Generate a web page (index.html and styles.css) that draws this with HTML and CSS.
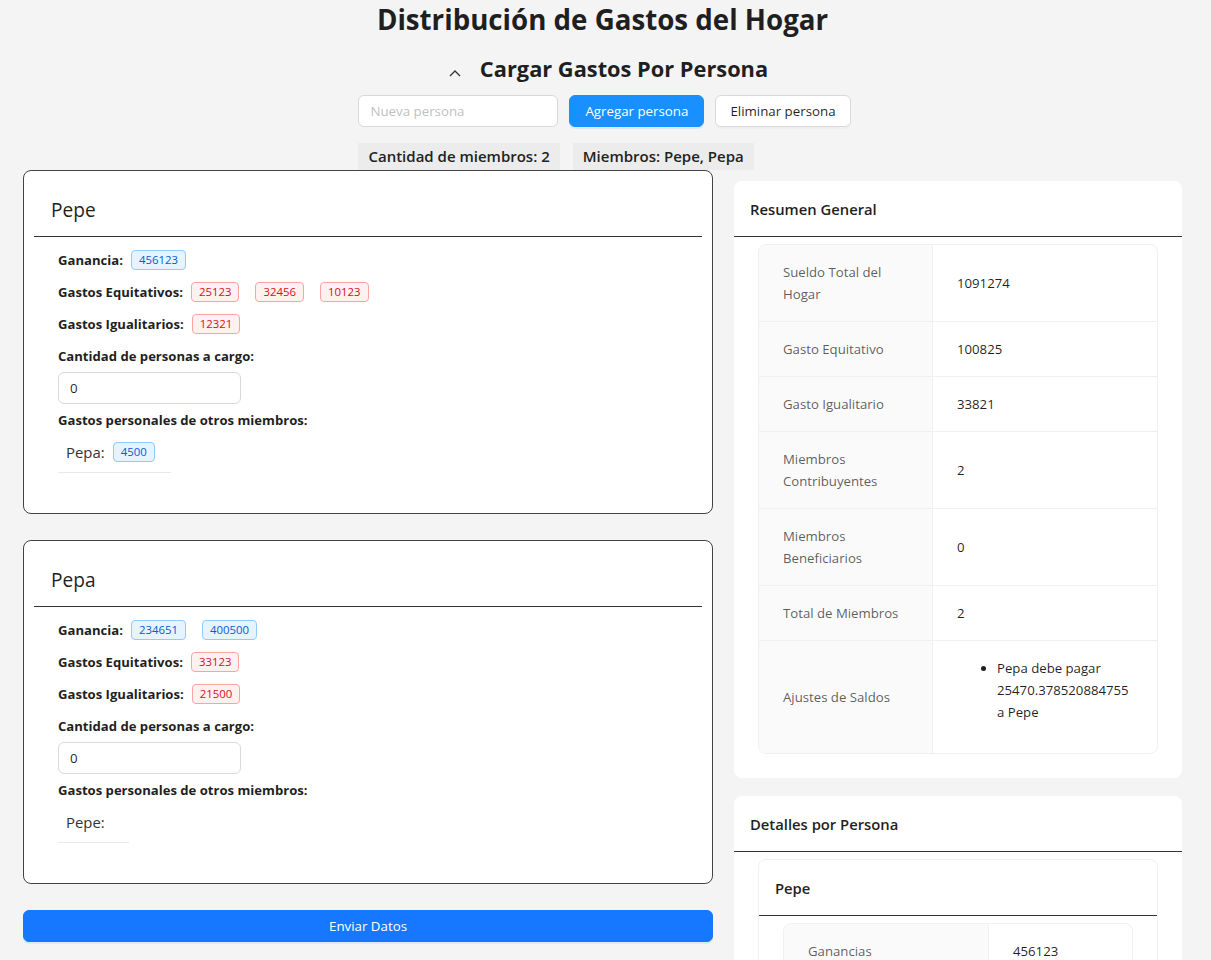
FILE: index.html
```html
<!DOCTYPE html>
<html lang="es">
<head>
<meta charset="utf-8">
<title>Distribución de Gastos del Hogar</title>
<link rel="stylesheet" href="styles.css">
</head>
<body>
<div class="page">
  <h1 class="title">Distribución de Gastos del Hogar</h1>
  <div class="section-head">
    <svg class="chevron" width="12" height="8" viewBox="0 0 12 8"><polyline points="1,7 6,2 11,7" fill="none" stroke="#333" stroke-width="1.3"/></svg>
    <h2 class="section-title">Cargar Gastos Por Persona</h2>
  </div>
  <div class="controls">
    <div class="add-row">
      <input class="text-input" type="text" placeholder="Nueva persona">
      <button class="btn btn-primary">Agregar persona</button>
      <button class="btn btn-default">Eliminar persona</button>
    </div>
    <div class="stats">
      <span class="stat">Cantidad de miembros: 2</span>
      <span class="stat">Miembros: Pepe, Pepa</span>
    </div>
  </div>

  <div class="main">
    <div class="left">
      <div class="person-card">
        <div class="person-head">Pepe</div>
        <div class="person-body">
          <div class="row"><span class="label">Ganancia:</span><span class="tag tag-blue">456123</span></div>
          <div class="row"><span class="label">Gastos Equitativos:</span><span class="tag tag-red">25123</span><span class="tag tag-red">32456</span><span class="tag tag-red">10123</span></div>
          <div class="row"><span class="label">Gastos Igualitarios:</span><span class="tag tag-red">12321</span></div>
          <div class="row"><span class="label">Cantidad de personas a cargo:</span></div>
          <input class="num-input" type="text" value="0">
          <div class="row"><span class="label">Gastos personales de otros miembros:</span></div>
          <div class="other-list">
            <div class="other-item"><span class="other-name">Pepa:</span><span class="tag tag-blue">4500</span></div>
          </div>
        </div>
      </div>

      <div class="person-card">
        <div class="person-head">Pepa</div>
        <div class="person-body">
          <div class="row"><span class="label">Ganancia:</span><span class="tag tag-blue">234651</span><span class="tag tag-blue">400500</span></div>
          <div class="row"><span class="label">Gastos Equitativos:</span><span class="tag tag-red">33123</span></div>
          <div class="row"><span class="label">Gastos Igualitarios:</span><span class="tag tag-red">21500</span></div>
          <div class="row"><span class="label">Cantidad de personas a cargo:</span></div>
          <input class="num-input" type="text" value="0">
          <div class="row"><span class="label">Gastos personales de otros miembros:</span></div>
          <div class="other-list">
            <div class="other-item"><span class="other-name">Pepe:</span></div>
          </div>
        </div>
      </div>

      <button class="btn btn-submit">Enviar Datos</button>
    </div>

    <div class="right">
      <div class="panel">
        <div class="panel-head">Resumen General</div>
        <div class="panel-body">
          <table class="desc">
            <tr><th>Sueldo Total del Hogar</th><td>1091274</td></tr>
            <tr><th>Gasto Equitativo</th><td>100825</td></tr>
            <tr><th>Gasto Igualitario</th><td>33821</td></tr>
            <tr><th>Miembros Contribuyentes</th><td>2</td></tr>
            <tr><th>Miembros Beneficiarios</th><td>0</td></tr>
            <tr><th>Total de Miembros</th><td>2</td></tr>
            <tr><th>Ajustes de Saldos</th><td><ul class="adjust"><li>Pepa debe pagar 25470.378520884755 a Pepe</li></ul></td></tr>
          </table>
        </div>
      </div>

      <div class="panel panel-details">
        <div class="panel-head">Detalles por Persona</div>
        <div class="panel-body">
          <div class="inner-card">
            <div class="inner-head">Pepe</div>
            <div class="inner-body">
              <table class="desc desc-person">
                <tr><th>Ganancias</th><td>456123</td></tr>
                <tr><th>Gastos Equitativos</th><td>67702</td></tr>
                <tr><th>Gastos Igualitarios</th><td>12321</td></tr>
              </table>
            </div>
          </div>
        </div>
      </div>
    </div>
  </div>
</div>
</body>
</html>
```

FILE: styles.css
```css
* { box-sizing: border-box; }

html, body {
  margin: 0;
  padding: 0;
  background: #f4f4f4;
  font-family: "Open Sans", "Noto Sans", sans-serif;
  color: rgba(0, 0, 0, 0.88);
  font-size: 13.2px;
}

.page {
  padding: 0 29px 40px 23px;
}

.title {
  margin: 0;
  text-align: center;
  font-size: 27.7px;
  line-height: 38px;
  font-weight: 700;
  color: #1f1f1f;
}

.section-head {
  margin-top: 12px;
  padding-left: 12px;
  display: flex;
  justify-content: center;
  align-items: center;
  gap: 19px;
  height: 38px;
}

.chevron {
  margin-top: 8px;
}

.section-title {
  margin: 0;
  font-size: 21.8px;
  line-height: 38px;
  font-weight: 700;
  color: #1f1f1f;
}

.controls {
  width: fit-content;
  margin: 7px auto 0;
  padding-left: 4px;
  display: flex;
  flex-direction: column;
  align-items: flex-start;
}

.add-row {
  display: flex;
  gap: 11px;
}

.text-input {
  width: 200px;
  height: 32px;
  border: 1px solid #d9d9d9;
  border-radius: 6px;
  padding: 4px 11px;
  font: inherit;
  font-size: 13.3px;
  background: #fff;
  outline: none;
}

.text-input::placeholder { color: #bfbfbf; }

.btn {
  height: 32px;
  padding: 4px 15px;
  border-radius: 6px;
  font: inherit;
  font-size: 13.3px;
  line-height: 22px;
  cursor: pointer;
}

.btn-primary {
  background: #1890ff;
  color: #fff;
  border: 1px solid #1890ff;
  box-shadow: 0 2px 0 rgba(5, 145, 255, 0.1);
}

.btn-default {
  background: #fff;
  color: rgba(0, 0, 0, 0.88);
  border: 1px solid #d9d9d9;
  padding: 4px 14px;
  box-shadow: 0 2px 0 rgba(0, 0, 0, 0.02);
}

.stats {
  margin-top: 16px;
  display: flex;
  gap: 13px;
}

.stat {
  background: #ececec;
  padding: 0 10px;
  height: 27px;
  line-height: 27px;
  font-size: 15px;
  font-weight: 600;
  color: #222;
}

.main {
  display: grid;
  grid-template-columns: 690px 448px;
  gap: 21px;
  align-items: start;
}

/* left column */
.person-card {
  border: 1px solid #444;
  border-radius: 8px;
  background: #fff;
  padding: 0 10px;
  margin-bottom: 26px;
}

.person-head {
  padding: 25px 17px 12px;
  font-size: 19.1px;
  line-height: 28px;
  font-weight: 500;
  color: #1f1f1f;
  border-bottom: 1px solid #333;
}

.person-body {
  padding: 7px 24px 40px;
}

.row {
  display: flex;
  align-items: center;
  height: 32px;
}

.label {
  font-weight: 700;
  font-size: 13.1px;
  color: #1f1f1f;
  margin-right: 8px;
}

.tag {
  display: inline-block;
  height: 20px;
  line-height: 18px;
  padding: 0 7px;
  font-size: 11.4px;
  border: 1px solid;
  border-radius: 4px;
  margin-right: 16px;
}

.tag-blue {
  background: #e6f4ff;
  border-color: #91caff;
  color: #0958d9;
}

.tag-red {
  background: #fff1f0;
  border-color: #ffa39e;
  color: #cf1322;
}

.num-input {
  display: block;
  width: 183px;
  height: 32px;
  border: 1px solid #d9d9d9;
  border-radius: 6px;
  padding: 4px 11px;
  font: inherit;
  font-size: 13.3px;
  color: rgba(0, 0, 0, 0.88);
  background: #fff;
  outline: none;
}

.other-list {
  display: flex;
}

.other-item {
  display: flex;
  align-items: center;
  padding: 6px 16px 10px 8px;
  border-bottom: 1px solid #e8e8e8;
  line-height: 20px;
}

.other-name {
  font-size: 14.9px;
  color: #333;
  margin-right: 8px;
}

.other-item .tag {
  margin-right: 0;
}

.btn-submit {
  display: block;
  width: 100%;
  background: #1677ff;
  color: #fff;
  border: 1px solid #1677ff;
  box-shadow: 0 2px 0 rgba(5, 145, 255, 0.1);
}

/* right column */
.right {
  margin-top: 11px;
}

.panel {
  background: #fff;
  border-radius: 8px;
}

.panel-details {
  margin-top: 18px;
}

.panel-head {
  height: 56px;
  padding: 0 16px;
  display: flex;
  align-items: center;
  font-size: 14.8px;
  font-weight: 600;
  color: #1f1f1f;
  border-bottom: 1px solid #333;
}

.panel-body {
  padding: 7px 24px 24px;
}

.desc {
  width: 100%;
  border: 1px solid #f0f0f0;
  border-radius: 8px;
  border-spacing: 0;
  border-collapse: separate;
  overflow: hidden;
  font-size: 13.2px;
  line-height: 22px;
}

.desc th,
.desc td {
  padding: 16px 24px;
  text-align: left;
  vertical-align: middle;
  border-bottom: 1px solid #f0f0f0;
}

.desc tr:last-child th,
.desc tr:last-child td {
  border-bottom: none;
}

.desc th {
  width: 174px;
  background: #fafafa;
  font-weight: 400;
  color: rgba(0, 0, 0, 0.65);
  border-right: 1px solid #f0f0f0;
}

.desc td {
  color: rgba(0, 0, 0, 0.88);
}

.adjust {
  margin: 0 0 14px;
  padding-left: 40px;
}

.inner-card {
  border: 1px solid #f0f0f0;
  border-radius: 8px;
}

.inner-head {
  height: 56px;
  padding: 0 16px;
  display: flex;
  align-items: center;
  font-size: 14.8px;
  font-weight: 600;
  color: #1f1f1f;
  border-bottom: 1px solid #333;
}

.inner-body {
  padding: 7px 24px 24px;
}

.desc-person th {
  width: 205px;
}
```
